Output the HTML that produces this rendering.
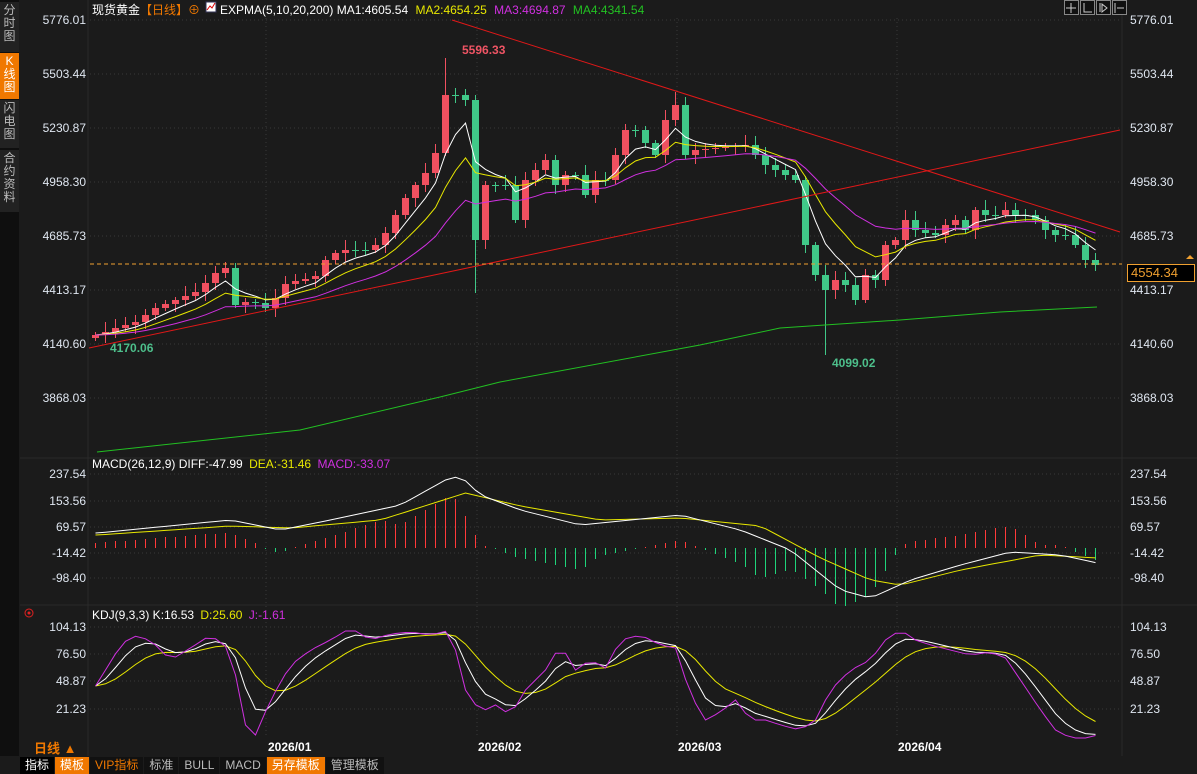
<!DOCTYPE html>
<html><head><meta charset="utf-8"><style>
body{margin:0;width:1197px;height:774px;background:#1b1b1b;overflow:hidden;font-family:"Liberation Sans","Noto Sans CJK SC",sans-serif;position:relative}
.side{position:absolute;left:0;top:0;width:19px;height:756px;background:#0f0f0f}
.side div{position:absolute;left:0;width:19px;color:#bbb;font-size:12px;line-height:13px;text-align:center;background:#222}
.bar{position:absolute;left:20px;top:757px;height:17px;display:flex;font-size:12px;line-height:17px}
.bar span{display:block;padding:0 5px;background:#111;color:#bbb;margin-right:1px}
svg{position:absolute;left:0;top:0}
</style></head><body>
<svg id="s" width="1197" height="774" font-family="Liberation Sans, Noto Sans CJK SC, sans-serif"></svg>
<div class="side">
<div style="top:2px;height:48px;padding-top:2px">分<br>时<br>图</div>
<div style="top:53px;height:44px;background:#f07800;color:#fff;padding-top:2px">K<br>线<br>图</div>
<div style="top:100px;height:46px;padding-top:2px">闪<br>电<br>图</div>
<div style="top:150px;height:60px;padding-top:2px">合<br>约<br>资<br>料</div>
</div>
<div class="bar"><span style="color:#fff;background:#000">指标</span><span style="background:#f07800;color:#fff">模板</span><span style="color:#f07800">VIP指标</span><span>标准</span><span>BULL</span><span>MACD</span><span style="background:#f07800;color:#fff">另存模板</span><span>管理模板</span></div>
<script>
const s=document.getElementById('s');let h='';
const R='#f05060',G='#40c888';
function hg(y){h+=`<line x1="90" y1="${y}" x2="1120" y2="${y}" stroke="#3a3a3a" stroke-dasharray="1,3"/>`}
[20,74,128,182,236,290,344,398].forEach(hg);[474,501,527,553,578,627,654,681,709].forEach(hg);
[266,477,677,897].forEach(x=>h+=`<line x1="${x}" y1="18" x2="${x}" y2="735" stroke="#3a3a3a" stroke-dasharray="1,3"/>`);
h+=`<line x1="88" y1="0" x2="88" y2="756" stroke="#2a2a2a"/><line x1="1122" y1="0" x2="1122" y2="756" stroke="#2a2a2a"/><line x1="20" y1="458" x2="1197" y2="458" stroke="#2a2a2a"/><line x1="20" y1="605" x2="1197" y2="605" stroke="#2a2a2a"/>`;
function lab(y,t){h+=`<text x="86" y="${y+4}" fill="#dfe6f0" font-size="12" text-anchor="end">${t}</text><text x="1130" y="${y+4}" fill="#dfe6f0" font-size="12">${t}</text>`}
[[20,'5776.01'],[74,'5503.44'],[128,'5230.87'],[182,'4958.30'],[236,'4685.73'],[290,'4413.17'],[344,'4140.60'],[398,'3868.03'],[474,'237.54'],[501,'153.56'],[527,'69.57'],[553,'-14.42'],[578,'-98.40'],[627,'104.13'],[654,'76.50'],[681,'48.87'],[709,'21.23']].forEach(a=>lab(a[0],a[1]));
function ip(pts,N,x0,st){let r=[];for(let i=0;i<N;i++){const x=x0+i*st;let j=0;while(j<pts.length-2&&pts[j+1][0]<x)j++;const[a,b]=[pts[j],pts[j+1]];r.push(a[1]+(b[1]-a[1])*Math.max(0,Math.min(1,(x-a[0])/(b[0]-a[0]))))}return r}
const P=[[95,335],[140,320],[150,310],[200,290],[210,275],[225,268],[235,305],[250,300],[270,310],[280,285],[320,275],[325,260],[340,250],[370,250],[380,240],[390,225],[400,205],[410,190],[420,180],[430,165],[440,140],[445,95],[455,95],[465,100],[475,240],[485,185],[495,185],[505,185],[515,220],[525,180],[535,170],[545,160],[555,185],[565,175],[575,175],[585,195],[595,180],[605,180],[615,155],[625,130],[635,130],[655,155],[665,120],[675,105],[685,155],[695,150],[745,145],[755,155],[765,165],[775,170],[785,175],[795,180],[805,245],[815,275],[825,290],[835,280],[845,285],[855,300],[865,275],[875,280],[885,245],[895,240],[905,220],[915,230],[935,235],[945,225],[955,220],[965,230],[975,210],[985,215],[995,215],[1005,210],[1015,215],[1025,215],[1035,220],[1045,230],[1055,235],[1065,235],[1075,245],[1085,260],[1095,265]];
const n=101,dx=10,X0=95.5;
const C=ip(P,n,95,dx);
let prev=338;C.forEach((c,i)=>{const x=X0+i*dx;const o=prev;const col=c<o?R:G;const t=Math.round(Math.min(o,c)),b=Math.round(Math.max(o,c));
let hi=t-3-(i*7%8),lo=b+3+(i*5%7);if(i==35)hi=58;if(i==38)lo=293;if(i==73)lo=355;if(i==58)hi=92;
h+=`<line x1="${x}" y1="${hi}" x2="${x}" y2="${lo}" stroke="${col}"/><rect x="${x-3.5}" y="${t}" width="7" height="${Math.max(1,b-t)}" fill="${col}"/>`;prev=c});
function ema(a,k){let r=[],v=a[0];a.forEach(z=>{v=v+(z-v)*k;r.push(v)});return r}
function pl(a,col){h+=`<polyline fill="none" stroke="${col}" points="${a.map((y,i)=>(X0+i*dx).toFixed(1)+','+y.toFixed(1)).join(' ')}"/>`}
pl(ema(C,0.33),'#fff');pl(ema(C,0.18),'#e8e800');pl(ema(C,0.095),'#d030e0');
h+=`<polyline fill="none" stroke="#22c022" points="97,452 300,430 440,397 500,382 700,345 780,328 900,320 1000,312 1097,307"/>`;
h+=`<line x1="89" y1="348" x2="1120" y2="130" stroke="#e01818"/><line x1="452" y1="20" x2="1120" y2="232" stroke="#e01818"/>`;
h+=`<line x1="90" y1="264" x2="1122" y2="264" stroke="#f0a030" stroke-dasharray="4,3"/><rect x="1127.5" y="264.5" width="67" height="17" fill="#000" stroke="#f0a030"/><text x="1131" y="277" fill="#f0a030" font-size="13">4554.34</text><path d="M1186,259 l4,-4 l4,4z" fill="#f0a030"/>`;
h+=`<text x="462" y="54" fill="#ef5464" font-size="12" font-weight="bold">5596.33</text><text x="110" y="352" fill="#4dbf8b" font-size="12" font-weight="bold">4170.06</text><text x="832" y="367" fill="#4dbf8b" font-size="12" font-weight="bold">4099.02</text>`;
const DIF=ip([[97,533],[230,520],[280,530],[330,520],[400,505],[445,480],[460,476],[480,495],[520,510],[580,525],[650,518],[680,515],[740,530],[790,550],[840,590],[870,598],[910,580],[960,565],[1010,552],[1060,555],[1097,563]],n,95,dx);
const DEA=ip([[97,535],[230,526],[290,528],[380,520],[465,493],[520,506],[600,520],[680,518],[760,526],[820,558],[870,580],[900,585],[960,570],[1040,555],[1097,558]],n,95,dx);
DIF.forEach((d,i)=>{const x=95+i*dx;let v=Math.round((DEA[i]-d)*2.6);v=Math.max(-60,Math.min(60,v));
if(v>0)h+=`<rect x="${x}" y="${548-v}" width="1" height="${v}" fill="#ff3a3a"/>`;else h+=`<rect x="${x}" y="548" width="1" height="${Math.max(1,-v)}" fill="#1fd47a"/>`});
pl(DEA,'#e8e800');pl(DIF,'#fff');
const J=ip([[97,686],[110,660],[130,635],[150,640],[170,660],[190,648],[210,635],[230,650],[245,725],[255,735],[270,700],[290,665],[310,650],[330,640],[350,628],[370,640],[390,634],[410,632],[430,635],[450,630],[465,690],[480,712],[495,705],[510,715],[525,690],[545,670],[560,645],[575,670],[590,660],[605,668],[620,640],[640,635],[660,645],[675,648],[690,695],[705,720],[720,712],[735,700],[750,720],[765,720],[780,725],[800,730],[815,720],[830,690],[850,670],[870,660],[885,640],[900,630],[915,640],[930,645],[950,650],[970,655],[990,652],[1005,658],[1020,680],[1040,710],[1055,730],[1070,738],[1085,738],[1097,735]],n,95,dx);
const K=ema(J,0.45),D=ema(K,0.3);
pl(D,'#e8e800');pl(K,'#fff');pl(J,'#d030e0');
h+=`<text x="92" y="14" font-size="12"><tspan fill="#fff">现货黄金</tspan><tspan fill="#f07800">【日线】</tspan><tspan fill="#f07800">⊕</tspan></text><rect x="206" y="2" width="10" height="10" fill="#fff" stroke="#335"/><path d="M207,10 l3,-4 l2,2 l3,-5" stroke="#d00" fill="none"/>
<text x="220" y="14" font-size="12"><tspan fill="#fff">EXPMA(5,10,20,200) MA1:4605.54 </tspan><tspan fill="#e8e800" dx="4">MA2:4654.25 </tspan><tspan fill="#d030e0" dx="4">MA3:4694.87 </tspan><tspan fill="#22c022" dx="4">MA4:4341.54</tspan></text>
<text x="92" y="468" font-size="12"><tspan fill="#fff">MACD(26,12,9) DIFF:-47.99 </tspan><tspan fill="#e8e800" dx="3">DEA:-31.46 </tspan><tspan fill="#d030e0" dx="3">MACD:-33.07</tspan></text>
<text x="92" y="619" font-size="12"><tspan fill="#fff">KDJ(9,3,3) K:16.53 </tspan><tspan fill="#e8e800" dx="3">D:25.60 </tspan><tspan fill="#d030e0" dx="3">J:-1.61</tspan></text>
<circle cx="29" cy="613" r="4" fill="none" stroke="#e02020"/><circle cx="29" cy="613" r="1.5" fill="#e02020"/>
<text x="34" y="753" fill="#f07800" font-size="13" font-weight="bold">日线 ▲</text>`;
[[268,'2026/01'],[478,'2026/02'],[678,'2026/03'],[898,'2026/04']].forEach(a=>h+=`<text x="${a[0]}" y="751" fill="#fff" font-size="12" font-weight="bold">${a[1]}</text>`);
[1064,1080,1096,1112].forEach(x=>h+=`<rect x="${x+.5}" y="0.5" width="14" height="14" fill="#111" stroke="#888"/>`);
h+=`<path d="M1071,3v10M1066,8h10M1084,3v9h8M1100,3v9M1102,4l5,4l-5,4zM1115,3v10M1117,8h7" stroke="#ccc" fill="none"/>`;
s.innerHTML=h;
</script>
</body></html>
